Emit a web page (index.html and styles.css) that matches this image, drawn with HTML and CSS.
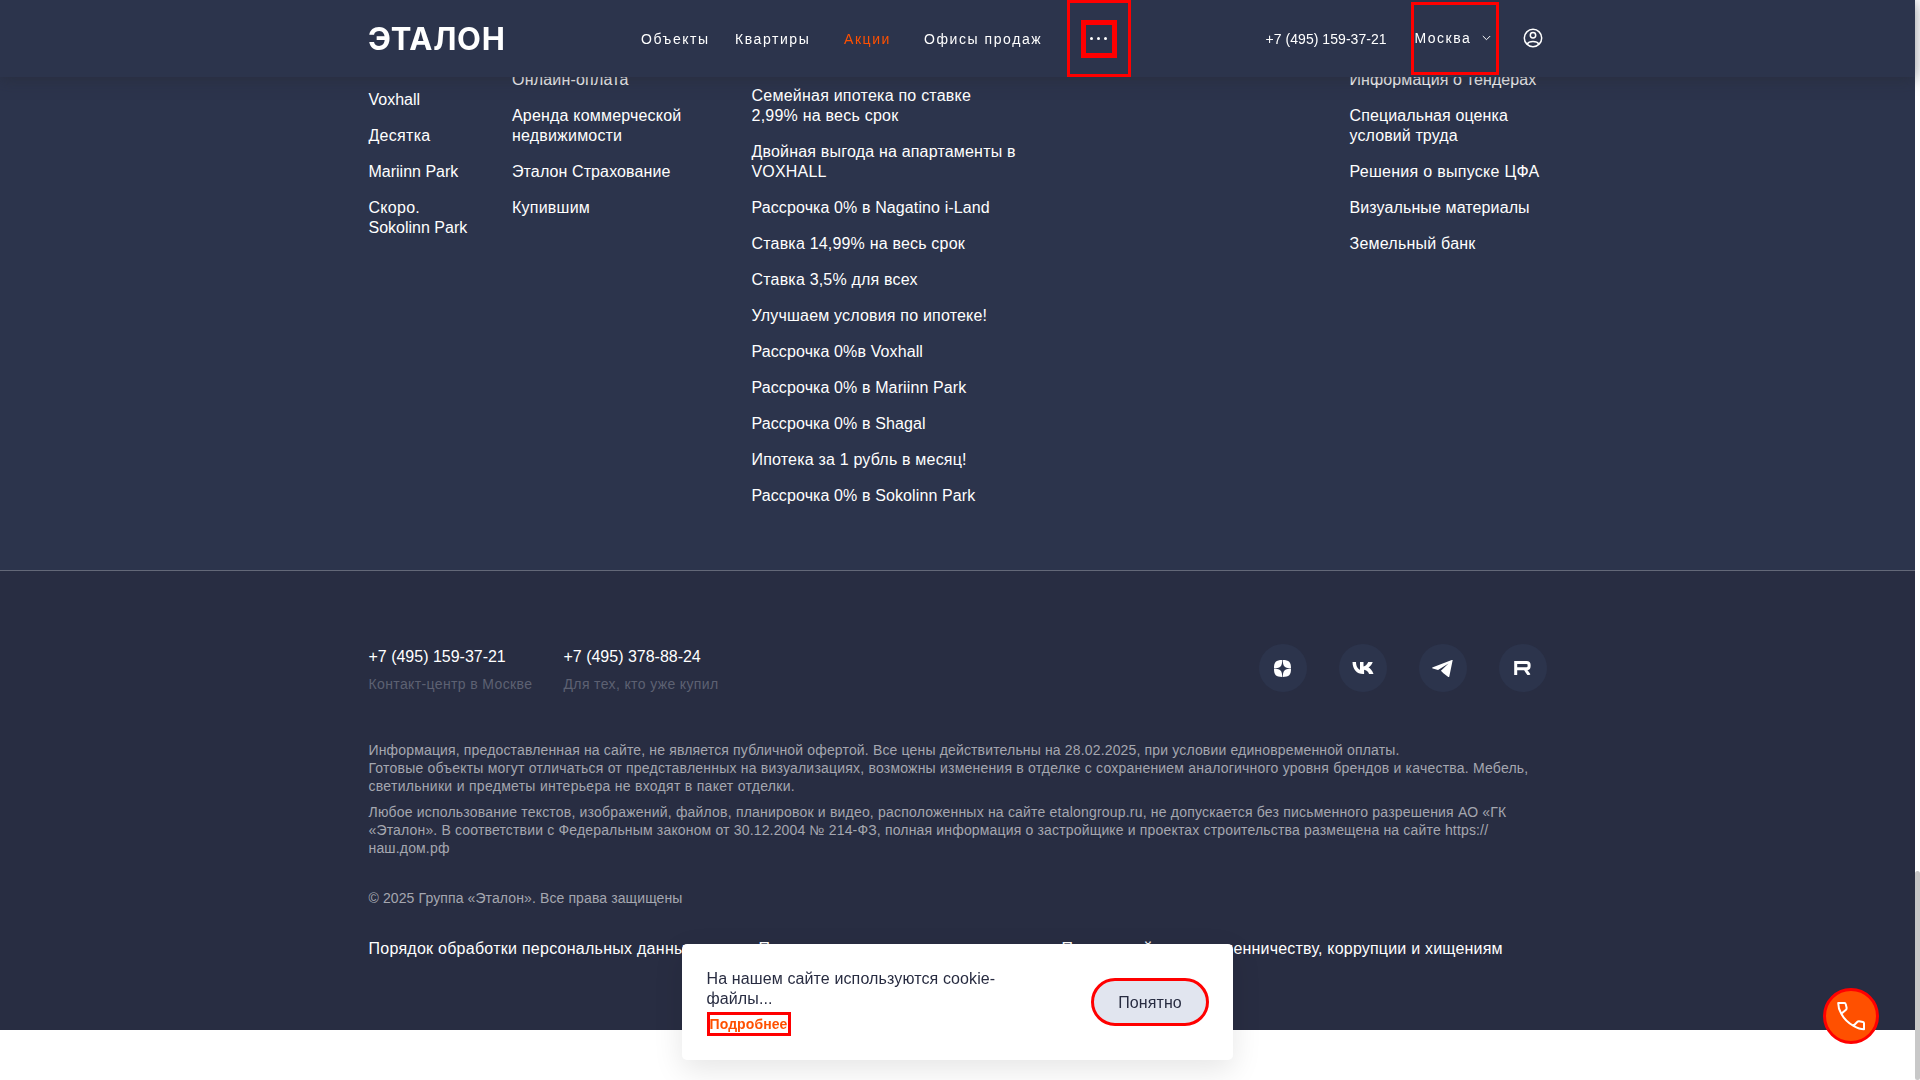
FILE: index.html
```
<!DOCTYPE html>
<html lang="ru">
<head>
<meta charset="utf-8">
<title>Эталон</title>
<link rel="stylesheet" href="styles.css">
</head>
<body>
<header class="header">
  <a class="logo">ЭТАЛОН</a>
  <nav class="nav">
    <a class="nav-objects">Объекты</a>
    <a class="nav-flats">Квартиры</a>
    <a class="nav-promo">Акции</a>
    <a class="nav-offices">Офисы продаж</a>
  </nav>
  <div class="more"><button class="more-btn"><i></i><i></i><i></i></button></div>
  <a class="header-phone">+7 (495) 159-37-21</a>
  <div class="city"><span>Москва</span>
    <svg width="9" height="6" viewBox="0 0 9 6" fill="none" stroke="#fff"><path d="M.8 1 4.5 4.7 8.2 1"/></svg>
  </div>
  <svg class="user" width="20" height="20" viewBox="0 0 20 20" fill="none" stroke="#fff" stroke-width="1.5"><circle cx="10" cy="10" r="8.700"/><circle cx="10" cy="7.3" r="2.7"/><path d="M4 16.2c1.200-2 3.200-2.700 6-2.700s4.800.700 6 2.700"/></svg>
</header>

<main class="page">
  <section class="menu">
    <div class="wrap menu-grid">
      <ul class="list col-projects">
        <li class="latin">Voxhall</li>
        <li class="widest">Десятка</li>
        <li class="latin">Mariinn Park</li>
        <li class="widest">Скоро.<br><span class="latin">Sokolinn Park</span></li>
      </ul>
      <ul class="list col-buyers">
        <li>Онлайн-оплата</li>
        <li>Аренда коммерческой<br>недвижимости</li>
        <li class="mixed">Эталон Страхование</li>
        <li class="wide">Купившим</li>
      </ul>
      <ul class="list col-promo">
        <li class="wide">Семейная ипотека по ставке<br>2,99% на весь срок</li>
        <li>Двойная выгода на апартаменты в<br>VOXHALL</li>
        <li class="mixed">Рассрочка 0% в Nagatino i-Land</li>
        <li>Ставка 14,99% на весь срок</li>
        <li>Ставка 3,5% для всех</li>
        <li>Улучшаем условия по ипотеке!</li>
        <li class="mixed">Рассрочка 0%в Voxhall</li>
        <li class="mixed">Рассрочка 0% в Mariinn Park</li>
        <li class="mixed">Рассрочка 0% в Shagal</li>
        <li>Ипотека за 1 рубль в месяц!</li>
        <li class="mixed">Рассрочка 0% в Sokolinn Park</li>
      </ul>
      <ul class="list col-about">
        <li class="mixed">Информация о тендерах</li>
        <li class="mixed">Специальная оценка<br>условий труда</li>
        <li class="widest">Решения о выпуске ЦФА</li>
        <li class="mixed">Визуальные материалы</li>
        <li class="wide">Земельный банк</li>
      </ul>
    </div>
  </section>

  <footer class="footer">
    <div class="wrap">
      <div class="contacts">
        <div class="contact contact-main"><b>+7 (495) 159-37-21</b><small>Контакт-центр в Москве</small></div>
        <div class="contact"><b>+7 (495) 378-88-24</b><small>Для тех, кто уже купил</small></div>
        <div class="socials">
          <a class="social"><svg width="17" height="17" viewBox="0 0 17 17" fill="#fff"><path d="M8.200 0C8.200 2 8 5 6.500 6.500 5 8 2 8.200 0 8.200 0 2 2 0 8.200 0ZM8.800 0C8.800 2 9 5 10.500 6.500 12 8 15 8.200 17 8.200 17 2 15 0 8.800 0ZM8.200 17C8.200 15 8 12 6.500 10.500 5 9 2 8.800 0 8.800 0 15 2 17 8.200 17ZM8.800 17C8.800 15 9 12 10.500 10.500 12 9 15 8.800 17 8.800 17 15 15 17 8.800 17Z"/></svg></a>
          <a class="social"><svg width="22" height="12" viewBox="0 0 22 12" fill="#fff"><path d="M11.300 12C4.600 12 .700 7.400.500 0H4c.100 5 2.300 7.200 4 7.700V0h3.500v4.500C13.400 4.200 15.400 2.200 16.200 0h4.500c-.700 2.300-2.500 4.400-4.200 5.500 1.700.9 3.700 2.800 5 6.500h-4.400c-.900-2.300-2.900-4-5-4.200V12Z"/></svg></a>
          <a class="social"><svg width="21" height="17" viewBox="0 0 21 17" fill="#fff"><path d="M20.700.1 17.300 16.500c-.1.600-.6.700-1 .4L11.400 13.200 8.900 10.800 16.500 3.500 6 10 .8 8.500c-.9-.3-.9-.9.100-1.300L19.800 0c.6-.2 1-.1.900.1Z"/></svg></a>
          <a class="social"><svg width="17" height="14" viewBox="0 0 17 14" fill="none" stroke="#fff" stroke-width="3"><path d="M1.700 14V1.500H12.500c1.700 0 2.600.700 2.600 2.300v1.500c0 1.600-1 2.400-2.600 2.400H1.700M11 8l4.200 6"/></svg></a>
        </div>
      </div>
      <p class="legal">
        <span class="t1">Информация, предоставленная на сайте, не является публичной офертой. Все цены действительны на 28.02.2025, при условии единовременной оплаты.</span><br>
        <span class="t2">Готовые объекты могут отличаться от представленных на визуализациях, возможны изменения в отделке с сохранением аналогичного уровня брендов и качества. Мебель,</span><br>
        <span class="t3">светильники и предметы интерьера не входят в пакет отделки.</span>
      </p>
      <p class="legal">
        <span class="t4">Любое использование текстов, изображений, файлов, планировок и видео, расположенных на сайте etalongroup.ru, не допускается без письменного разрешения АО «ГК</span><br>
        <span class="t5">«Эталон». В соответствии с Федеральным законом от 30.12.2004 № 214-ФЗ, полная информация о застройщике и проектах строительства размещена на сайте https://</span><br>
        <span class="t5">наш.дом.рф</span>
      </p>
      <p class="copyright">© 2025 Группа «Эталон». Все права защищены</p>
      <div class="docs">
        <a class="doc-data">Порядок обработки персональных данных</a>
        <a class="doc-rules">Правила использования ресурса</a>
        <a>Противодействие мошенничеству, коррупции и хищениям</a>
      </div>
    </div>
  </footer>
</main>

<aside class="cookie">
  <div class="cookie-text">
    <p>На нашем сайте используются cookie-<br>файлы...</p>
    <a class="details">Подробнее</a>
  </div>
  <button class="accept">Понятно</button>
</aside>

<button class="call"><svg width="30" height="30" viewBox="0 0 30 30" fill="none" stroke="#fff" stroke-width="2" stroke-linejoin="round"><path d="M2.200 2H8.500Q9.500 2 9.700 3L10.600 6.800Q10.800 8 10 8.700L5.300 12.800C3.300 9.500 2.200 5.500 2.200 2ZM5.300 12.800C8.200 18.200 12 22 17.500 24.800L21.200 21Q22 20.200 23 20.300L27 21Q28 21.200 28 22.200V28.200C24.300 28.200 20.800 26.700 17.500 24.800"/></svg></button>
<div class="scrollbar"><div class="thumb"></div></div>
</body>
</html>
```
FILE: styles.css
```
* { box-sizing: border-box; }
html, body { margin: 0; height: 100%; overflow: hidden; }
body { font: 16px/20px "Liberation Sans", Arial, sans-serif; color: #fff; background: #fff; }
button { font: inherit; padding: 0; margin: 0; }
p, ul { margin: 0; padding: 0; list-style: none; }
svg { display: block; }

.header {
  position: fixed; top: 0; left: 0; width: 1915px; height: 77px; z-index: 5;
  padding-left: 368px; display: flex; align-items: center;
  background: #2c344c; box-shadow: 0 2px 14px rgba(37, 40, 50, .5);
  font-size: 14px;
}
.logo { width: 273px; font: 700 31px/40px Inter, sans-serif; letter-spacing: .7px; padding-top: 1px; }
.nav { display: flex; width: 425.5px; letter-spacing: 1.57px; padding-top: 1px; }
.nav-objects { width: 94px; }
.nav-flats { width: 109px; }
.nav-promo { width: 80px; color: #ff5000; }
.more { width: 64.5px; height: 77px; border: 3px solid #f00; display: flex; align-items: center; justify-content: center; }
.more-btn { width: 36px; height: 38px; border: 5px solid #f00; background: none; display: flex; gap: 4px; align-items: center; justify-content: center; }
.more-btn i { width: 3px; height: 3px; border-radius: 50%; background: #fff; }
.header-phone { margin-left: 134.500px; width: 145px; letter-spacing: .05px; padding-top: 1px; }
.city { width: 88px; height: 73px; border: 3px solid #f00; display: flex; align-items: center; justify-content: space-between; padding: 0 5px 1px 1px; letter-spacing: 1.5px; }
.user { margin: -2px 0 0 24px; }

.page { width: 1915px; }
.wrap { width: 1179px; margin-left: 368.5px; }
.menu { height: 571px; background: #2c344c; border-bottom: 1px solid #636878; }
.menu-grid { display: grid; grid-template-columns: 143.500px 239.500px 598px 198px; padding-top: 70px; }
.list { display: flex; flex-direction: column; gap: 16px; letter-spacing: .19px; white-space: nowrap; }
.col-projects { padding-top: 20px; }
.col-promo { padding-top: 16px; }
.latin { letter-spacing: 0; }
.mixed { letter-spacing: .11px; }
.wide { letter-spacing: .23px; }
.widest { letter-spacing: .28px; }

.footer { height: 459px; background: #282d42; padding-top: 73px; white-space: nowrap; }
.contacts { display: flex; height: 97px; }
.contact { padding-top: 3px; display: flex; flex-direction: column; gap: 7px; }
.contact-main { width: 195px; }
.contact b { font-weight: 400; letter-spacing: -.01px; }
.contact small { font-size: 14px; line-height: 20px; color: #5d6172; letter-spacing: .37px; }
.socials { display: flex; gap: 32px; margin-left: auto; margin-right: 1px; }
.social { width: 48px; height: 48px; border-radius: 50%; background: #2c344c; display: flex; align-items: center; justify-content: center; }
.legal { font-size: 14px; line-height: 18px; color: #a5a7b0; margin-bottom: 8px; }
.t1 { letter-spacing: .155px; }
.t2 { letter-spacing: .21px; }
.t3 { letter-spacing: .29px; }
.t4 { letter-spacing: .195px; }
.t5 { letter-spacing: .165px; }
.copyright { font-size: 14px; line-height: 18px; color: #a5a7b0; letter-spacing: .11px; margin-top: 32px; }
.docs { display: flex; margin-top: 32px; letter-spacing: .2px; }
.doc-data { width: 390px; letter-spacing: .26px; }
.doc-rules { width: 303px; }

.cookie {
  position: fixed; left: 682px; top: 944px; width: 551px; height: 116px; z-index: 6;
  padding: 24px 24px 24px 24.5px; display: flex; justify-content: space-between;
  color: #282c41; background: #fff; border-radius: 5px; box-shadow: 0 10px 30px rgba(0, 0, 0, .1);
}
.cookie-text { display: flex; flex-direction: column; align-items: flex-start; padding-top: 1px; }
.cookie-text p { letter-spacing: .12px; }
.details { height: 24px; margin-top: 3px; border: 3px solid #f00; font-size: 14px; line-height: 18px; font-weight: 700; color: #ff5000; letter-spacing: .1px; }
.accept { margin-top: 10px; width: 118px; height: 48px; border-radius: 24px; border: 3px solid #f00; background: #e1e5ef; color: #282c41; letter-spacing: .1px; padding-top: 1px; }
.call { position: fixed; left: 1823px; top: 988px; width: 56px; height: 56px; z-index: 6; border: 3px solid #f00; border-radius: 50%; background: #ff5000; display: flex; align-items: center; justify-content: center; }
.scrollbar { position: fixed; right: 0; top: 0; width: 5px; height: 100%; background: #fff; padding-top: 871px; }
.thumb { height: 209px; border-radius: 3px; background: #c8c8c8; }
```
